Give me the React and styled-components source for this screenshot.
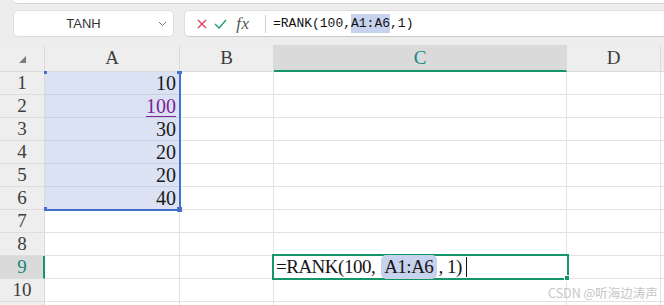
import React from "react";
import styled, { createGlobalStyle } from "styled-components";

const GlobalStyle = createGlobalStyle`
  body {
    margin: 0;
    font-family: "Liberation Serif", serif;
    background: #fff;
  }
`;

const Page = styled.div`
  width: 664px;
  height: 305px;
  overflow: hidden;
  position: relative;
  background: #fff;
`;

const TopStrip = styled.div`
  height: 4px;
  background: #ededed;
  display: flex;
`;

const PrevPanel = styled.div`
  flex: 1;
  margin-left: 14px;
  height: 3px;
  background: #fff;
  border-bottom: 1px solid #d6d6d6;
  border-bottom-left-radius: 4px;
`;

const Toolbar = styled.div`
  height: 41px;
  box-sizing: border-box;
  padding: 6px 0 8px 13px;
  background: #ededed;
  display: flex;
  gap: 10px;
`;

const NameBox = styled.div`
  width: 161px;
  height: 27px;
  box-sizing: border-box;
  background: #fff;
  border: 1px solid #dedede;
  border-radius: 5px;
  display: flex;
  align-items: center;
  position: relative;
  font-family: "Liberation Sans", sans-serif;
  font-size: 13px;
  color: #333;
  justify-content: center;
  padding-right: 20px;
`;

const Chevron = styled.svg`
  position: absolute;
  right: 6px;
  top: 10px;
`;

const FormulaBox = styled.div`
  flex: 1;
  margin-right: -12px;
  height: 27px;
  box-sizing: border-box;
  background: #fff;
  border: 1px solid #dedede;
  border-bottom-color: #cacaca;
  border-radius: 5px;
  display: flex;
  align-items: center;
  padding-left: 10px;
`;

const IconSlot = styled.div`
  width: ${(p) => p.$w}px;
  display: flex;
  align-items: center;
  justify-content: center;
`;

const Fx = styled.span`
  font-family: "Liberation Serif", serif;
  font-style: italic;
  font-size: 17px;
  color: #555;
  letter-spacing: 0.5px;
`;

const Divider = styled.div`
  width: 1px;
  height: 18px;
  background: #cfcfcf;
  margin: 0 7px 0 10px;
`;

const FormulaText = styled.div`
  font-family: "Liberation Mono", monospace;
  font-size: 13px;
  color: #111;
  white-space: pre;
  display: flex;
  align-items: center;
`;

const RefMark = styled.span`
  background: #c7d2ef;
  border-radius: ${(p) => (p.$round ? "5px" : "0")};
  padding: ${(p) => (p.$round ? "1px 4px 1px 3px" : "2px 0")};
  margin: ${(p) => (p.$round ? "0 1px 0 6px" : "0")};
`;

const Sheet = styled.div`
  display: grid;
  grid-template-columns: 45px 135px 94px 293px 94px 1fr;
  grid-template-rows: 27px repeat(11, 23px);
`;

const Corner = styled.div`
  background: #eeeeee;
  border-right: 1px solid #dadada;
  border-bottom: 1px solid #dadada;
  box-sizing: border-box;
  position: relative;
`;

const CornerMark = styled.div`
  position: absolute;
  left: 19px;
  top: 11px;
  width: 0;
  height: 0;
  border-left: 7px solid transparent;
  border-bottom: 7px solid #7a7a7a;
`;

const ColHeader = styled.div`
  box-sizing: border-box;
  background: ${(p) => (p.$active ? "#dadada" : "#eeeeee")};
  border-right: 1px solid #dadada;
  border-bottom: ${(p) => (p.$active ? "2px solid #15956a" : "1px solid #dadada")};
  color: ${(p) => (p.$active ? "#14897a" : "#3d3d3d")};
  font-size: 19px;
  display: flex;
  align-items: center;
  justify-content: center;
  padding-top: ${(p) => (p.$active ? "1px" : "0")};
`;

const RowHeader = styled.div`
  grid-column: 1;
  grid-row: ${(p) => p.$row};
  box-sizing: border-box;
  background: ${(p) => (p.$active ? "#dadada" : "#eeeeee")};
  border-right: ${(p) => (p.$active ? "2px solid #15956a" : "1px solid #dadada")};
  border-bottom: 1px solid #dedede;
  color: ${(p) => (p.$active ? "#14897a" : "#3d3d3d")};
  font-size: 19px;
  display: flex;
  align-items: center;
  justify-content: center;
  padding-left: ${(p) => (p.$active ? "1px" : "0")};
`;

const Cell = styled.div`
  grid-column: ${(p) => p.$col};
  grid-row: ${(p) => p.$row};
  box-sizing: border-box;
  background: ${(p) => (p.$selected ? "#dbe2f3" : "#fff")};
  border-right: 1px solid #e2e2e2;
  border-bottom: 1px solid ${(p) => (p.$selected ? "#c9d0e1" : "#e2e2e2")};
  font-size: 20px;
  color: #1a1a1a;
  display: flex;
  align-items: center;
  justify-content: flex-end;
  padding-right: 3px;
  line-height: 1;
`;

const LinkValue = styled.span`
  color: #80229a;
  text-decoration: underline;
  text-decoration-thickness: 1px;
  text-underline-offset: 3px;
`;

const RangeBox = styled.div`
  grid-column: 2;
  grid-row: 2 / 8;
  margin: 0 -1px -1px 0;
  border-right: 2px solid #4470cc;
  border-bottom: 2px solid #4470cc;
  position: relative;
  pointer-events: none;
  z-index: 2;
`;

const Handle = styled.div`
  position: absolute;
  background: #4470cc;
  ${(p) => p.$pos}
`;

const ActiveCell = styled.div`
  grid-column: 4;
  grid-row: 10;
  margin: -2px -2px -1px -2px;
  border: 2px solid #15956a;
  background: #fff;
  position: relative;
  z-index: 3;
  display: flex;
  align-items: center;
  padding-left: 2px;
  font-size: 19px;
  letter-spacing: -0.5px;
  color: #151515;
  white-space: pre;
`;

const Caret = styled.span`
  display: inline-block;
  width: 1px;
  height: 20px;
  background: #111;
  margin-left: 4px;
`;

const FillHandle = styled.div`
  position: absolute;
  right: -3px;
  bottom: -3px;
  width: 4px;
  height: 4px;
  background: #15956a;
  border: 1px solid #fff;
`;

const Watermark = styled.div`
  position: absolute;
  left: 548px;
  top: 283px;
  font-family: "Noto Sans CJK SC", "Noto Sans", sans-serif;
  font-size: 12.5px;
  color: #c6c6c6;
  white-space: nowrap;
`;

const columns = ["A", "B", "C", "D", ""];
const values = ["10", "100", "30", "20", "20", "40"];
const rowCount = 11;

const App = () => {
  const rows = Array.from({ length: rowCount }, (_, i) => i + 1);
  return (
    <>
      <GlobalStyle />
      <Page>
        <TopStrip>
          <PrevPanel />
        </TopStrip>
        <Toolbar>
          <NameBox>
            TANH
            <Chevron width="9" height="6" viewBox="0 0 9 6">
              <path d="M1 1 L4.5 4.5 L8 1" fill="none" stroke="#777" strokeWidth="1" />
            </Chevron>
          </NameBox>
          <FormulaBox>
            <IconSlot $w={14}>
              <svg width="10" height="10" viewBox="0 0 10 10">
                <path d="M1 1 L9 9 M9 1 L1 9" stroke="#e3415a" strokeWidth="1.4" />
              </svg>
            </IconSlot>
            <IconSlot $w={22}>
              <svg width="13" height="10" viewBox="0 0 13 10">
                <path d="M1 5 L5 9 L12 1" fill="none" stroke="#1f9e6e" strokeWidth="1.4" />
              </svg>
            </IconSlot>
            <IconSlot $w={24}>
              <Fx>fx</Fx>
            </IconSlot>
            <Divider />
            <FormulaText>
              =RANK(100,<RefMark>A1:A6</RefMark>,1)
            </FormulaText>
          </FormulaBox>
        </Toolbar>

        <Sheet>
          <Corner>
            <CornerMark />
          </Corner>
          {columns.map((c) => (
            <ColHeader key={c || "e"} $active={c === "C"}>
              {c}
            </ColHeader>
          ))}

          {rows.map((r) => (
            <React.Fragment key={r}>
              <RowHeader $row={r + 1} $active={r === 9}>
                {r <= 10 ? r : ""}
              </RowHeader>
              {columns.map((c, ci) => {
                const selected = ci === 0 && r <= 6;
                const v = ci === 0 ? values[r - 1] : null;
                return (
                  <Cell key={ci} $col={ci + 2} $row={r + 1} $selected={selected}>
                    {v && (r === 2 ? <LinkValue>{v}</LinkValue> : v)}
                  </Cell>
                );
              })}
            </React.Fragment>
          ))}

          <RangeBox>
            <Handle $pos="left: -1px; top: -1px; width: 3px; height: 3px;" />
            <Handle $pos="right: -3px; top: -1px; width: 5px; height: 3px;" />
            <Handle $pos="left: -1px; bottom: -2px; width: 3px; height: 4px;" />
            <Handle $pos="right: -3px; bottom: -3px; width: 5px; height: 5px;" />
          </RangeBox>

          <ActiveCell>
            =RANK(100,
            <RefMark $round>A1:A6</RefMark>, 1)
            <Caret />
            <FillHandle />
          </ActiveCell>
        </Sheet>

        <Watermark>CSDN @听海边涛声</Watermark>
      </Page>
    </>
  );
};

export default App;
